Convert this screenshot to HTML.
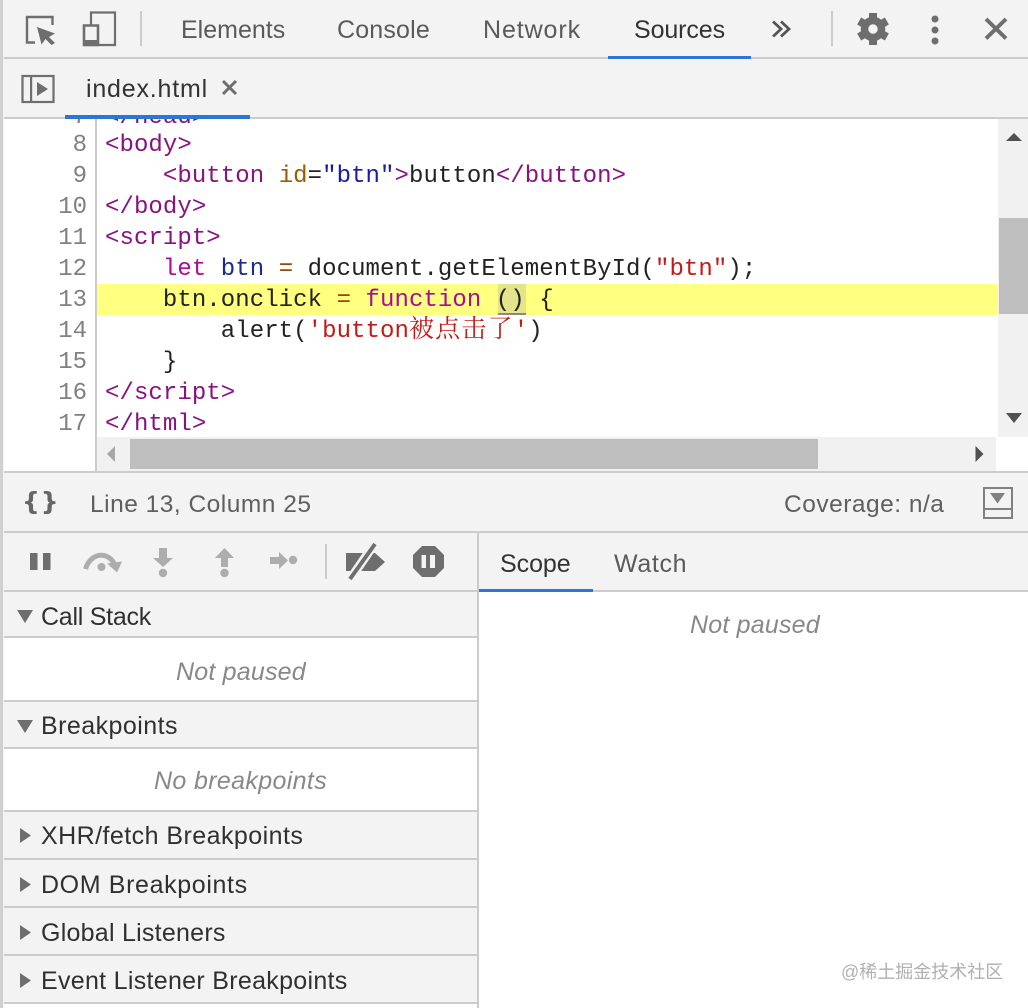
<!DOCTYPE html>
<html><head><meta charset="utf-8"><style>
html,body{margin:0;padding:0;background:#fff}
#r{position:relative;width:1028px;height:1008px;overflow:hidden;background:#fff;font-family:"Liberation Sans","Noto Sans CJK SC",sans-serif}
.a{position:absolute}
.t{position:absolute;white-space:nowrap;line-height:30px;height:30px;font-size:25px}
.c{position:absolute;left:105px;white-space:pre;font:24px/31px "Liberation Mono","Noto Sans CJK SC",monospace;letter-spacing:.07px;color:#222;height:31px}
.n{position:absolute;left:40px;width:47px;text-align:right;font:24px/31px "Liberation Mono",monospace;color:#808080;height:31px}
.p{color:#881280}.k{color:#aa0d91}.s{color:#c41a16}.o{color:#994500}.d{color:#a05a00}
.cj{font-family:"Noto Serif CJK SC",serif;font-size:25px;letter-spacing:1.2px;line-height:0}
.line{position:absolute;background:#ccc}
.sec{position:absolute;left:4px;width:473px;background:#f3f3f3;border-bottom:2px solid #ccc;box-sizing:border-box}
.it{color:#888;font-style:italic}
</style></head><body><div id="r">

<!-- backgrounds -->
<div class="a" style="left:0;top:0;width:1028px;height:118px;background:#f3f3f3"></div>
<div class="a" style="left:0;top:0;width:3px;height:1008px;background:#d0d0d0"></div>
<div class="a" style="left:3px;top:0;width:1px;height:1008px;background:#f3f3f3"></div>
<div class="line" style="left:4px;top:57px;width:1024px;height:2px"></div>
<div class="line" style="left:4px;top:117px;width:1024px;height:2px"></div>
<div class="a" style="left:608px;top:56px;width:143px;height:3px;background:#2a77d9"></div>
<div class="a" style="left:65px;top:115px;width:185px;height:4px;background:#2a77d9"></div>

<!-- toolbar icons -->
<svg class="a" style="left:0;top:0" width="160" height="60" viewBox="0 0 160 60">
<path d="M35 42.500H27V17H52.500V25" fill="none" stroke="#6e6e6e" stroke-width="2.400"/>
<path d="M37 27L55 33.500L49 37L55 43L51.500 45L45.500 39L41.500 44.500Z" fill="#6e6e6e"/>
<path d="M91 25V12.500H115V45H85" fill="none" stroke="#6e6e6e" stroke-width="2.200"/>
<path d="M84 25.500H98V45H84Z" fill="none" stroke="#6e6e6e" stroke-width="2.600"/>
<rect x="84" y="40" width="14" height="5" fill="#6e6e6e"/>
<rect x="140" y="11" width="2" height="35" fill="#ccc"/>
</svg>
<svg class="a" style="left:760px;top:0" width="268" height="60" viewBox="760 0 268 60">
<path d="M773 21.500L781 29L773 36.500M781 21.500L789 29L781 36.500" fill="none" stroke="#555" stroke-width="2.800"/>
<rect x="831" y="11" width="2" height="35" fill="#ccc"/>
<g transform="translate(873,29)">
<circle r="8.500" fill="none" stroke="#6e6e6e" stroke-width="7.500"/>
<g fill="#6e6e6e"><rect x="-4" y="-16" width="8" height="6"/><rect x="-4" y="10" width="8" height="6"/><rect x="-4" y="-16" width="8" height="6" transform="rotate(60)"/><rect x="-4" y="-16" width="8" height="6" transform="rotate(120)"/><rect x="-4" y="-16" width="8" height="6" transform="rotate(240)"/><rect x="-4" y="-16" width="8" height="6" transform="rotate(300)"/></g>
</g>
<g fill="#6e6e6e"><circle cx="935" cy="19" r="3.500"/><circle cx="935" cy="30" r="3.500"/><circle cx="935" cy="41" r="3.500"/></g>
<path d="M986 19L1006 38.500M1006 19L986 38.500" stroke="#6e6e6e" stroke-width="4" fill="none"/>
</svg>

<!-- main tabs -->
<div class="t" style="left:181px;top:15px;color:#5a5a5a;letter-spacing:0">Elements</div>
<div class="t" style="left:337px;top:15px;color:#5a5a5a;letter-spacing:.17px">Console</div>
<div class="t" style="left:483px;top:15px;color:#5a5a5a;letter-spacing:.9px">Network</div>
<div class="t" style="left:634px;top:15px;color:#333;letter-spacing:-.1px">Sources</div>

<!-- file tab row -->
<svg class="a" style="left:20px;top:74px" width="36" height="30" viewBox="0 0 36 30">
<rect x="2.500" y="2" width="31" height="26" fill="none" stroke="#6e6e6e" stroke-width="2.200"/>
<rect x="10" y="2" width="2.200" height="26" fill="#6e6e6e"/>
<path d="M17 8L28 15L17 22Z" fill="#6e6e6e"/>
</svg>
<div class="t" style="left:86px;top:74px;color:#333;letter-spacing:.8px">index.html</div>
<svg class="a" style="left:220px;top:78px" width="20" height="20"><path d="M3 3L16 16M16 3L3 16" stroke="#6e6e6e" stroke-width="3" fill="none"/></svg>

<!-- editor -->
<div class="a" style="left:4px;top:119px;width:1024px;height:352px;overflow:hidden;background:#fff">
<div style="position:absolute;left:-4px;top:-119px;width:1028px;height:480px">
<div class="a" style="left:95px;top:119px;width:2px;height:352px;background:#ccc"></div>
<div class="a" style="left:97px;top:284px;width:901px;height:31px;background:#ffff80"></div>
<div class="a" style="left:498px;top:284px;width:28px;height:31px;background:#e4e48a"></div>
<div class="a" style="left:498px;top:313px;width:28px;height:2px;background:#888"></div>

<div class="n" style="top:102px">7</div><div class="c p" style="top:102px">&lt;/head&gt;</div>
<div class="n" style="top:130px">8</div><div class="c p" style="top:130px">&lt;body&gt;</div>
<div class="n" style="top:161px">9</div><div class="c" style="top:161px">    <span class="p">&lt;button</span> <span class="d">id</span>=<span style="color:#1a1aa6">"btn"</span><span class="p">&gt;</span>button<span class="p">&lt;/button&gt;</span></div>
<div class="n" style="top:192px">10</div><div class="c p" style="top:192px">&lt;/body&gt;</div>
<div class="n" style="top:223px">11</div><div class="c p" style="top:223px">&lt;script&gt;</div>
<div class="n" style="top:254px">12</div><div class="c" style="top:254px">    <span class="k">let</span> <span style="color:#1c2a88">btn</span> <span class="o">=</span> document.getElementById(<span class="s">"btn"</span>);</div>
<div class="n" style="top:285px">13</div><div class="c" style="top:285px">    btn.onclick <span class="o">=</span> <span class="k">function</span> () {</div>
<div class="n" style="top:316px">14</div><div class="c" style="top:316px">        alert(<span class="s">'button<span class="cj">被点击了</span>'</span>)</div>
<div class="n" style="top:347px">15</div><div class="c" style="top:347px">    }</div>
<div class="n" style="top:378px">16</div><div class="c p" style="top:378px">&lt;/script&gt;</div>
<div class="n" style="top:409px">17</div><div class="c p" style="top:409px">&lt;/html&gt;</div>

<!-- vertical scrollbar -->
<div class="a" style="left:998px;top:119px;width:30px;height:318px;background:#f1f1f1"></div>
<div class="a" style="left:999px;top:218px;width:29px;height:96px;background:#bebebe"></div>
<svg class="a" style="left:1004px;top:131px" width="20" height="12"><path d="M2 10L10 2L18 10Z" fill="#505050"/></svg>
<svg class="a" style="left:1004px;top:413px" width="20" height="12"><path d="M2 0H18L10 10Z" fill="#505050"/></svg>
<!-- horizontal scrollbar -->
<div class="a" style="left:97px;top:437px;width:899px;height:34px;background:#f1f1f1"></div>
<div class="a" style="left:130px;top:439px;width:688px;height:30px;background:#bebebe"></div>
<svg class="a" style="left:106px;top:445px" width="12" height="18"><path d="M9 1V17L1 9Z" fill="#a8a8a8"/></svg>
<svg class="a" style="left:974px;top:445px" width="12" height="18"><path d="M1.500 1V17L9.500 9Z" fill="#505050"/></svg>
</div></div>

<!-- status bar -->
<div class="a" style="left:4px;top:471px;width:1024px;height:62px;background:#f3f3f3;border-top:2px solid #ccc;border-bottom:2px solid #ccc;box-sizing:border-box"></div>
<div class="a" style="left:22px;top:485px;width:40px;height:34px;font:bold 25px/34px 'DejaVu Sans',sans-serif;color:#666;white-space:nowrap;letter-spacing:1px">{}</div>
<div class="t" style="left:90px;top:490px;color:#5f5f5f;font-size:24.500px;letter-spacing:.5px">Line 13, Column 25</div>
<div class="t" style="left:784px;top:490px;color:#5f5f5f;font-size:24.500px;letter-spacing:.5px">Coverage: n/a</div>
<svg class="a" style="left:982px;top:486px" width="32" height="34"><rect x="2" y="2" width="28" height="30" fill="none" stroke="#808080" stroke-width="2"/><rect x="2" y="22" width="28" height="2" fill="#808080"/><path d="M8 7H23L15.500 17.500Z" fill="#808080"/></svg>

<!-- left pane -->
<div class="a" style="left:4px;top:533px;width:474px;height:475px;background:#fff"></div>
<div class="a" style="left:4px;top:533px;width:474px;height:59px;background:#f3f3f3;border-bottom:2px solid #ccc;box-sizing:border-box"></div>
<svg class="a" style="left:4px;top:533px" width="474" height="58" viewBox="4 533 474 58">
<g fill="#6e6e6e"><rect x="30" y="553" width="7.500" height="17"/><rect x="43" y="553" width="7.500" height="17"/></g>
<path d="M85.500 569C90 553 108 550 115 565" fill="none" stroke="#adadad" stroke-width="5"/>
<g fill="#adadad">
<path d="M107 563.500L122 561.500L117 572.500Z"/>
<circle cx="101.500" cy="567" r="4"/>
<path d="M159 548H167V558H173L163 567L153 558H159Z"/><circle cx="163" cy="573" r="4.200"/>
<path d="M224.500 548L234 558H228V567H221V558H215Z"/><circle cx="224.500" cy="573" r="4.200"/>
<path d="M270 557H279V552L288 560.500L279 569V564H270Z"/><circle cx="293" cy="560" r="4.200"/>
</g>
<rect x="325" y="544" width="2" height="35" fill="#ccc"/>
<path d="M346 553H375L385 562L375 571H346Z" fill="#6e6e6e"/>
<path d="M349 581L375 543" stroke="#f3f3f3" stroke-width="9"/>
<path d="M350 579L375 544" stroke="#6e6e6e" stroke-width="4"/>
<path d="M422 546H435L444 555V568L435 577H422L413 568V555Z" fill="#6e6e6e"/>
<rect x="421.500" y="555" width="4.500" height="13" fill="#f3f3f3"/><rect x="430" y="555" width="5" height="13" fill="#f3f3f3"/>
</svg>

<div class="sec" style="top:592px;height:46px"></div>
<div class="sec" style="top:639px;height:63px;background:#fff"></div>
<div class="sec" style="top:702px;height:47px"></div>
<div class="sec" style="top:749px;height:63px;background:#fff"></div>
<div class="sec" style="top:812px;height:48px"></div>
<div class="sec" style="top:860px;height:48px"></div>
<div class="sec" style="top:908px;height:48px"></div>
<div class="sec" style="top:956px;height:48px"></div>

<svg class="a" style="left:0;top:592px" width="40" height="416" viewBox="0 592 40 416"><g fill="#6e6e6e">
<path d="M17 610H33L25 623Z"/><path d="M17 720H33L25 733Z"/>
<path d="M20 828L31 835.500L20 843Z"/><path d="M20 877L31 884.500L20 892Z"/><path d="M20 925L31 932.500L20 940Z"/><path d="M20 973L31 980.500L20 988Z"/>
</g></svg>

<div class="t" style="left:41px;top:602px;color:#303030;letter-spacing:-.25px">Call Stack</div>
<div class="t it" style="left:176px;top:657px;letter-spacing:.2px">Not paused</div>
<div class="t" style="left:41px;top:711px;color:#303030;letter-spacing:.45px">Breakpoints</div>
<div class="t it" style="left:154px;top:766px;letter-spacing:.35px">No breakpoints</div>
<div class="t" style="left:41px;top:821px;color:#303030;letter-spacing:.45px">XHR/fetch Breakpoints</div>
<div class="t" style="left:41px;top:870px;color:#303030;letter-spacing:.63px">DOM Breakpoints</div>
<div class="t" style="left:41px;top:918px;color:#303030;letter-spacing:.25px">Global Listeners</div>
<div class="t" style="left:41px;top:966px;color:#303030;letter-spacing:.3px">Event Listener Breakpoints</div>

<!-- divider & right pane -->
<div class="a" style="left:477px;top:533px;width:2px;height:475px;background:#ccc"></div>
<div class="a" style="left:479px;top:533px;width:549px;height:59px;background:#f3f3f3;border-bottom:2px solid #ccc;box-sizing:border-box"></div>
<div class="a" style="left:479px;top:589px;width:114px;height:3px;background:#2a77d9"></div>
<div class="t" style="left:500px;top:549px;color:#333;letter-spacing:-.05px">Scope</div>
<div class="t" style="left:614px;top:549px;color:#5a5a5a;letter-spacing:.65px">Watch</div>
<div class="t it" style="left:690px;top:610px;letter-spacing:.2px">Not paused</div>

<div class="a" style="left:841px;top:960px;white-space:nowrap;font:18px/24px 'Liberation Sans','Noto Sans CJK SC',sans-serif;color:#b0b0b0">@稀土掘金技术社区</div>
</div></body></html>
